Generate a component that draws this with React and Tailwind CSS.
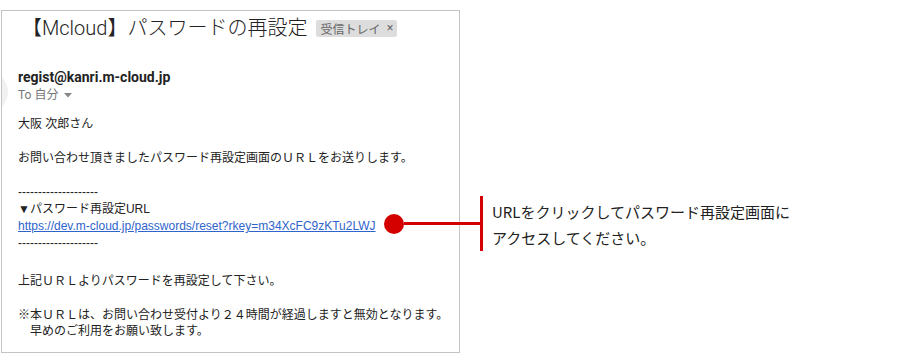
export default function App() {
    const body = "font-['Liberation_Sans','Noto_Sans_CJK_JP',sans-serif] text-[12px] leading-[17px] text-[#222]"

    return (
        <div className="relative w-[900px] h-[363px] bg-white overflow-hidden">
            <div className="relative ml-[1px] mt-[10px] w-[459px] h-[343px] border border-[#c4c4c4] overflow-hidden bg-white">
                <div className="absolute -left-[36px] top-[60px] w-[42px] h-[42px] rounded-full bg-[#f1f1f1]"></div>

                <div className="flex flex-row items-center pl-[20px] pt-[3px]">
                    <h1 className="font-['Roboto','Noto_Sans_CJK_JP',sans-serif] text-[20px] leading-[28px] font-light text-[#222]">
                        【Mcloud】パスワードの再設定
                    </h1>
                    <span className="ml-[9px] mt-[1px] h-[17px] px-[4px] flex items-center gap-[6px] rounded-[2px] bg-[#dddddd] text-[#666] font-['Noto_Sans_CJK_JP',sans-serif] text-[12px] leading-[17px]">
                        受信トレイ
                        <span className="font-['Liberation_Sans',sans-serif] text-[12px] text-[#555]">×</span>
                    </span>
                </div>

                <div className="pl-[16px] mt-[26px]">
                    <div className="font-['Roboto',sans-serif] font-bold text-[14px] leading-[18px] text-[#222]">
                        regist@kanri.m-cloud.jp
                    </div>
                    <div className="mt-[1px] flex flex-row items-center font-['Roboto','Noto_Sans_CJK_JP',sans-serif] text-[12px] leading-[16px] text-[#777]">
                        To 自分
                        <svg width="8" height="5" viewBox="0 0 8 5" className="ml-[6px]">
                            <path d="M0 0 L8 0 L4 4.5 Z" fill="#888" />
                        </svg>
                    </div>
                </div>

                <div className={"pl-[16px] mt-[13px] " + body}>
                    <div>大阪 次郎さん</div>
                    <div className="h-[17px]"></div>
                    <div>お問い合わせ頂きましたパスワード再設定画面のＵＲＬをお送りします。</div>
                    <div className="h-[17px]"></div>
                    <div>--------------------</div>
                    <div>▼パスワード再設定URL</div>
                    <div>
                        <a href="#" className="text-[#2f64cc] underline">
                            https://dev.m-cloud.jp/passwords/reset?rkey=m34XcFC9zKTu2LWJ
                        </a>
                    </div>
                    <div>--------------------</div>
                    <div className="h-[21px]"></div>
                    <div>上記ＵＲＬよりパスワードを再設定して下さい。</div>
                    <div className="h-[17px]"></div>
                    <div className="leading-[16px]">※本ＵＲＬは、お問い合わせ受付より２４時間が経過しますと無効となります。</div>
                    <div className="leading-[16px]">　早めのご利用をお願い致します。</div>
                </div>
            </div>

            {/* annotation */}
            <div className="absolute left-[384px] top-[196px] flex flex-row items-center">
                <div className="w-[20px] h-[20px] rounded-full bg-[#d40000]"></div>
                <div className="w-[76px] h-[3px] bg-[#d40000]"></div>
                <div className="w-[3px] h-[55px] bg-[#d40000]"></div>
                <div className="ml-[9px] pt-[2px] font-['Noto_Sans_CJK_JP',sans-serif] text-[15px] leading-[26px] text-[#222]">
                    <div>URLをクリックしてパスワード再設定画面に</div>
                    <div>アクセスしてください。</div>
                </div>
            </div>
        </div>
    )
}
